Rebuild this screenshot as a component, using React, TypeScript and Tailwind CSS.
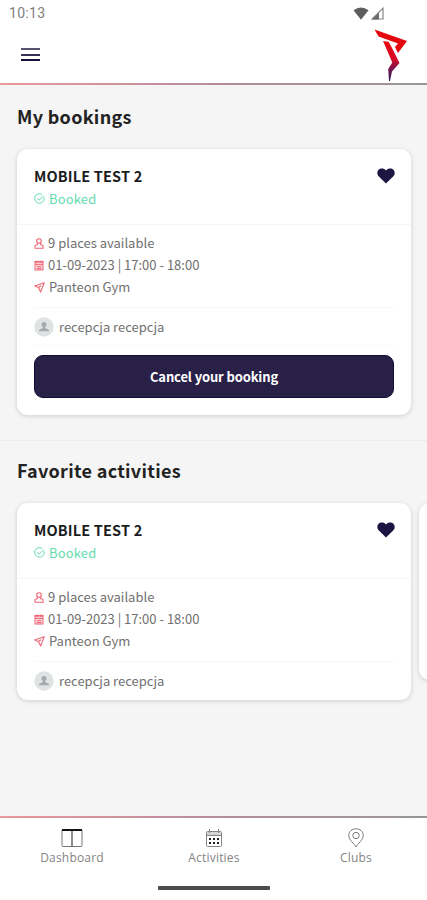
import type { ReactNode } from "react";

const sourceFont = "font-['Noto_Sans_CJK_SC','Noto_Sans',sans-serif]";

function StatusBar() {
  return (
    <div className="flex h-[27px] items-center justify-between pl-[9px] pr-[43px] font-[Roboto,sans-serif] text-[14px] tracking-[0.3px] text-[#808080]">
      <span>10:13</span>
      <span className="flex items-center gap-[2px]">
        <svg width="16" height="13" viewBox="0 0 16 13">
          <path d="M0.5 3.3Q8-2.5 15.5 3.3L8 12.7Z" fill="#5d5d5d" />
        </svg>
        <svg width="13" height="13" viewBox="0 0 13 13">
          <path d="M1.2 12H12V1.2Z" fill="none" stroke="#888" strokeWidth="1.2" />
          <path d="M1 12.4H8V5.4Z" fill="#6b6b6b" />
        </svg>
      </span>
    </div>
  );
}

function Header() {
  return (
    <div className="flex h-14 justify-between pl-[21px] pr-[19px]">
      <div className="mt-[21px] flex h-[13px] w-[19px] flex-col justify-between">
        <div className="h-[2px] bg-[#56536f]" />
        <div className="h-[2px] bg-[#373357]" />
        <div className="h-[2px] bg-[#151039]" />
      </div>
      <svg className="mt-[2px]" width="34" height="53" viewBox="0 0 34 53">
        <defs>
          <linearGradient id="logo" x1="0" y1="0" x2="0" y2="1">
            <stop offset="0" stopColor="#e80b12" />
            <stop offset="0.45" stopColor="#d80a24" />
            <stop offset="0.7" stopColor="#75194e" />
            <stop offset="1" stopColor="#2a1d62" />
          </linearGradient>
        </defs>
        <path d="M0.5 0.5L33 12L24 24L21 18L24 14.6L4.5 7.6Z" fill="#e5080f" />
        <path d="M9 12L14.5 12.8L17 17L25.5 34L18 42.5L16 52H15L14.2 40L18.3 33.5Z" fill="url(#logo)" />
      </svg>
    </div>
  );
}

function GradientRule() {
  return <div className="h-[2px] bg-linear-to-r from-[#eb989c] via-[#b68d9d] to-[#979698]" />;
}

function HeartIcon() {
  return (
    <svg className="mt-[3px]" width="18" height="16" viewBox="0 0 18 16">
      <path d="M9 15.6L1.6 8.3C-.1 6.4-.1 3.5 1.5 1.8C3.5-.1 6.8 0 9 2.4C11.2 0 14.5-.1 16.5 1.8C18.1 3.5 18.1 6.4 16.4 8.3Z" fill="#1e1642" />
    </svg>
  );
}

function CheckIcon() {
  return (
    <svg width="11" height="11" viewBox="0 0 11 11" fill="none" stroke="#66dcae" strokeWidth="1">
      <path d="M10.1 4.2A4.8 4.8 0 1 1 8.1 1.4" />
      <path d="M3.2 5.2L5.2 7.2L9.8 2.4" />
    </svg>
  );
}

function PersonIcon() {
  return (
    <svg width="10" height="11" viewBox="0 0 10 11" fill="none" stroke="#ee6674" strokeWidth="1.1">
      <circle cx="5" cy="3" r="2.3" />
      <path d="M3.5 5.2L3.3 6.5L1 7.5V10.2H9V7.5L6.7 6.5L6.5 5.2" />
    </svg>
  );
}

function DateIcon() {
  return (
    <svg width="10" height="11" viewBox="0 0 10 11" fill="none" stroke="#ee6674" strokeWidth="1">
      <rect x="1" y="1.5" width="8" height="8.5" fill="#fbd5d9" />
      <path d="M0.5 2H9.5M1 4.4H9M3 0.5V3M7 0.5V3M3 6.7H7.2M3 8.5H7.2" />
    </svg>
  );
}

function SendIcon() {
  return (
    <svg width="11" height="11" viewBox="0 0 11 11" fill="none" stroke="#ee6674" strokeWidth="1.1" strokeLinejoin="round">
      <path d="M10.2 0.8L0.7 4.1L4.5 5.5L6.6 10.1Z" />
      <path d="M4.5 5.5L7 3.8" />
    </svg>
  );
}

function Avatar() {
  return (
    <svg width="20" height="20" viewBox="0 0 20 20">
      <circle cx="10" cy="10" r="9.7" fill="#e0e3e3" />
      <circle cx="10" cy="7.4" r="2.5" fill="#a3abab" />
      <path d="M8.8 9H11.2V11L15 13V14.2H5V13L8.8 11Z" fill="#a3abab" />
    </svg>
  );
}

function DetailRow({ icon, children }: { icon: ReactNode; children: ReactNode }) {
  return (
    <div className="flex h-[22px] items-center gap-1 text-[13px] leading-[22px] text-[#707070]">
      {icon}
      <span className="whitespace-nowrap">{children}</span>
    </div>
  );
}

function ActivityCard({ children, className }: { children?: ReactNode; className: string }) {
  return (
    <div className={`w-[394px] shrink-0 rounded-[11px] bg-white shadow-[0_1px_5px_rgba(0,0,0,0.16)] ${className}`}>
      <div className="flex h-[75px] justify-between pl-[17px] pr-4 pt-[16px]">
        <div>
          <div className="h-[22px] text-[14.5px] font-bold leading-[22px] tracking-[0.15px] text-[#1c1c1e]">MOBILE TEST 2</div>
          <div className="flex h-[23px] items-center gap-[4px] text-[13px] leading-[23px] tracking-[0.15px] text-[#66dcae]">
            <CheckIcon />
            <span>Booked</span>
          </div>
        </div>
        <HeartIcon />
      </div>
      <div className="h-px bg-[#f5f5f5]" />
      <div className="h-[82px] pl-[17px] pt-[7px]">
        <DetailRow icon={<PersonIcon />}>9 places available</DetailRow>
        <DetailRow icon={<DateIcon />}>01-09-2023 | 17:00 - 18:00</DetailRow>
        <DetailRow icon={<SendIcon />}>Panteon Gym</DetailRow>
      </div>
      <div className="mx-[17px] h-px bg-[#f8f8f8]" />
      <div className="flex h-[37px] items-center gap-[5px] pl-[17px] text-[13px] leading-5 text-[#707070]">
        <Avatar />
        <span>recepcja recepcja</span>
      </div>
      {children}
    </div>
  );
}

function NavItem({ label, icon }: { label: string; icon: ReactNode }) {
  return (
    <div className="flex flex-1 flex-col items-center pt-[8px]">
      <div className="flex h-[23px] items-center">{icon}</div>
      <span className="text-[12px] leading-[18px] tracking-[0.2px] text-[#858585]">{label}</span>
    </div>
  );
}

export default function App() {
  return (
    <div className="flex h-[900px] w-full flex-col overflow-hidden bg-[#f5f5f5]">
      <div className="bg-white">
        <StatusBar />
        <Header />
      </div>
      <GradientRule />
      <div className={`flex-1 overflow-hidden ${sourceFont}`}>
        <div className="pl-[17px] pt-4">
          <h1 className="h-12 text-[18px] font-bold leading-[30px] tracking-[0.3px] text-[#222]">My bookings</h1>
          <ActivityCard className="h-[266px]">
            <div className="mx-[17px] mb-[9px] h-px bg-[#f9f9f9]" />
            <button className="mx-[17px] flex h-[43px] w-[360px] items-center justify-center rounded-[9px] border border-[#130b36] bg-[#292048] text-[13px] font-bold tracking-[-0.13px] text-white">
              Cancel your booking
            </button>
          </ActivityCard>
        </div>
        <div className="mt-[25px] h-px bg-[#ececec]" />
        <div className="pl-[17px] pt-[14px]">
          <h2 className="h-12 text-[18px] font-bold leading-[30px] tracking-[0.3px] text-[#222]">Favorite activities</h2>
          <div className="flex items-start gap-2">
            <ActivityCard className="h-[197px]" />
            <div className="h-[177px] w-[394px] shrink-0 rounded-[11px] bg-white shadow-[0_1px_5px_rgba(0,0,0,0.16)]" />
          </div>
        </div>
      </div>
      <GradientRule />
      <div className="flex h-[82px] flex-col items-center bg-white">
        <div className="flex h-[68px] w-full pl-px font-['Open_Sans',sans-serif]">
          <NavItem
            label="Dashboard"
            icon={
              <svg width="22" height="20" viewBox="0 0 22 20" fill="none">
                <rect x="1" y="1.5" width="20" height="17" rx="1" stroke="#777" />
                <path d="M11 2V18" stroke="#444" strokeWidth="1.2" />
                <path d="M1 2H21" stroke="#111" strokeWidth="2" />
              </svg>
            }
          />
          <NavItem
            label="Activities"
            icon={
              <svg width="18" height="20" viewBox="0 0 18 20" fill="none" stroke="#858585">
                <rect x="1.5" y="3.5" width="15" height="15" rx="1" />
                <path d="M2 4H16V7.5H2Z" fill="#d5d5d5" stroke="none" />
                <path d="M1.5 7.5H16.5M4.5 1V5M13.5 1V5" />
                <path d="M4 11H14M4 15H14" stroke="#222" strokeWidth="2" strokeDasharray="2 2" />
              </svg>
            }
          />
          <NavItem
            label="Clubs"
            icon={
              <svg width="16" height="20" viewBox="0 0 16 20" fill="none" stroke="#777">
                <path d="M8 19C6.5 15.5 .8 12.5 .8 7.4C.8 3.4 4 .8 8 .8S15.2 3.4 15.2 7.4C15.2 12.5 9.5 15.5 8 19Z" />
                <circle cx="8" cy="7.5" r="3.2" />
              </svg>
            }
          />
        </div>
        <div className="h-1 w-[112px] rounded-[1px] bg-[#4b4b4b]" />
      </div>
    </div>
  );
}
